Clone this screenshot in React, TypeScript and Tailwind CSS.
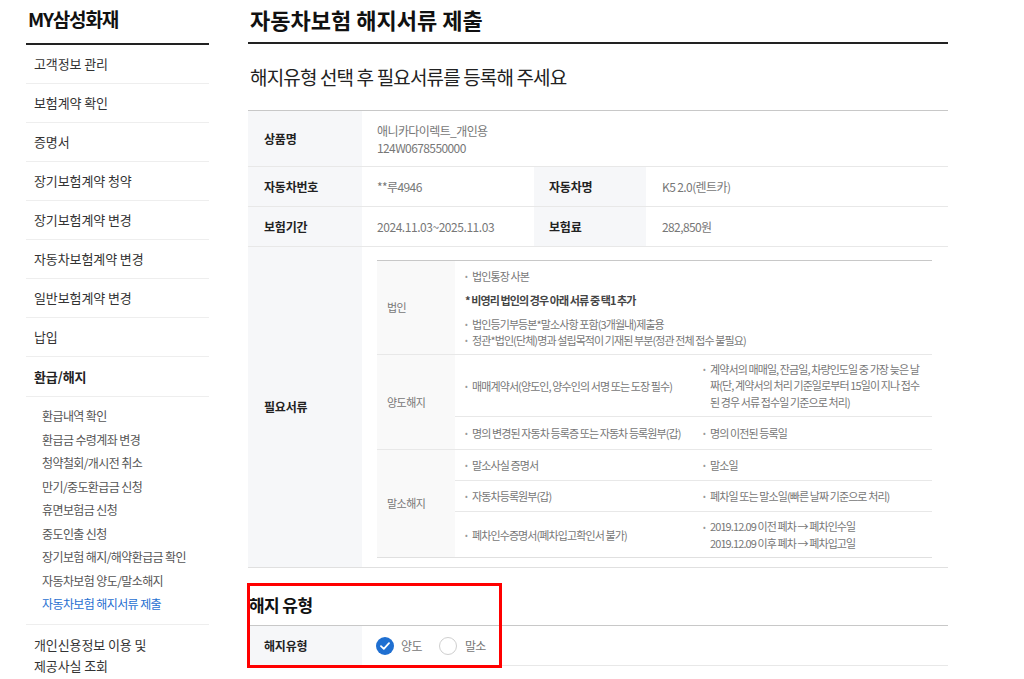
import React from "react";

const F = { fontFamily: '"Noto Sans CJK KR", "Noto Sans", sans-serif' };

function Bullet({ children }: { children: React.ReactNode }) {
  return (
    <div className="flex items-start leading-[16px]">
      <span className="w-[7px] shrink-0 text-[8px] text-[#999]">•</span>
      <span>{children}</span>
    </div>
  );
}

const menu = [
  "고객정보 관리",
  "보험계약 확인",
  "증명서",
  "장기보험계약 청약",
  "장기보험계약 변경",
  "자동차보험계약 변경",
  "일반보험계약 변경",
  "납입",
];

const sub = [
  "환급내역 확인",
  "환급금 수령계좌 변경",
  "청약철회/개시전 취소",
  "만기/중도환급금 신청",
  "휴면보험금 신청",
  "중도인출 신청",
  "장기보험 해지/해약환급금 확인",
  "자동차보험 양도/말소해지",
];

export default function App() {
  return (
    <div style={F} className="flex w-[1024px] h-[679px] overflow-hidden bg-white pl-[26px] text-[#333] tracking-[-0.6px]">
      <aside className="w-[183px] shrink-0">
        <div className="h-[45px] border-b-2 border-[#222] pl-[2px] pt-[5px] text-[19px] font-bold leading-[28px] text-[#111] tracking-[-1.2px]">
          MY삼성화재
        </div>
        {menu.map((m) => (
          <div key={m} className="flex h-[39px] items-center border-b border-[#eee] pl-[8px] text-[13px] tracking-[-0.1px]">
            {m}
          </div>
        ))}
        <div className="flex h-[40px] items-center border-b border-[#eee] pl-[8px] text-[13px] font-bold text-[#222] tracking-[-0.1px]">
          환급/해지
        </div>
        <div className="border-b border-[#eee] pb-[8px] pl-[16px] pt-[7px] text-[12px] text-[#555]">
          {sub.map((s) => (
            <div key={s} className="leading-[23.5px]">{s}</div>
          ))}
          <div className="leading-[23.5px] text-[#1f6fd1]">자동차보험 해지서류 제출</div>
        </div>
        <div className="pl-[8px] pt-[9px] text-[13px] leading-[21px] tracking-[-0.1px]">
          개인신용정보 이용 및<br />제공사실 조회
        </div>
      </aside>

      <main className="ml-[39px] w-[700px] shrink-0">
        <div className="h-[44px] border-b-2 border-[#222] pl-[2px] pt-[5px] text-[22px] font-bold leading-[28px] text-[#111] tracking-[0px]">
          자동차보험 해지서류 제출
        </div>
        <div className="pl-[2px] pt-[20px] pb-[20px] text-[19px] leading-[26px] text-[#222] tracking-[-0.85px]">
          해지유형 선택 후 필요서류를 등록해 주세요
        </div>

        <div className="border-t border-[#c8c8c8] text-[12px]">
          <div className="flex h-[56px] border-b border-[#e8e8e8]">
            <div className="flex w-[114px] shrink-0 items-center bg-[#f6f7f9] pl-[16px] font-bold text-[#222] tracking-[-0.2px]">상품명</div>
            <div className="flex flex-col justify-center pl-[15px] leading-[17px] text-[#777]">
              <div>애니카다이렉트_개인용</div>
              <div>124W0678550000</div>
            </div>
          </div>
          <div className="flex h-[40px] border-b border-[#e8e8e8]">
            <div className="flex w-[114px] shrink-0 items-center bg-[#f6f7f9] pl-[16px] font-bold text-[#222] tracking-[-0.2px]">자동차번호</div>
            <div className="flex w-[172px] items-center pl-[15px] text-[#777]">**루4946</div>
            <div className="flex w-[112px] shrink-0 items-center bg-[#f6f7f9] pl-[15px] font-bold text-[#222] tracking-[-0.2px]">자동차명</div>
            <div className="flex items-center pl-[16px] text-[#777]">K5 2.0(렌트카)</div>
          </div>
          <div className="flex h-[40px] border-b border-[#e8e8e8]">
            <div className="flex w-[114px] shrink-0 items-center bg-[#f6f7f9] pl-[16px] font-bold text-[#222] tracking-[-0.2px]">보험기간</div>
            <div className="flex w-[172px] items-center pl-[15px] text-[#777] tracking-[-0.45px]">2024.11.03~2025.11.03</div>
            <div className="flex w-[112px] shrink-0 items-center bg-[#f6f7f9] pl-[15px] font-bold text-[#222] tracking-[-0.2px]">보험료</div>
            <div className="flex items-center pl-[16px] text-[#777]">282,850원</div>
          </div>
          <div className="flex h-[321px] border-b border-[#e0e0e0]">
            <div className="flex w-[114px] shrink-0 items-center bg-[#f6f7f9] pl-[16px] font-bold text-[#222] tracking-[-0.2px]">필요서류</div>
            <div className="flex-1 pb-[12px] pl-[15px] pr-[16px] pt-[13px]">
              <div className="border-t border-[#c8c8c8] border-b border-b-[#e0e0e0] text-[11px] text-[#777] tracking-[-0.9px]">
                {/* 법인 */}
                <div className="flex h-[94px] border-b border-[#e8e8e8]">
                  <div className="flex w-[78px] shrink-0 items-center bg-[#f9f9f9] pl-[10px] tracking-[-0.5px]">법인</div>
                  <div className="pl-[10px] pt-[7px]">
                    <Bullet>법인통장 사본</Bullet>
                    <div className="my-[8px] font-bold leading-[16px] text-[#444]">* 비영리 법인의 경우 아래 서류 중 택1 추가</div>
                    <Bullet>법인등기부등본*말소사항 포함(3개월내)제출용</Bullet>
                    <Bullet>정관*법인(단체)명과 설립목적이 기재된 부분(정관 전체 접수 불필요)</Bullet>
                  </div>
                </div>
                {/* 양도해지 */}
                <div className="flex h-[95px] border-b border-[#e8e8e8]">
                  <div className="flex w-[78px] shrink-0 items-center bg-[#f9f9f9] pl-[10px] tracking-[-0.5px]">양도해지</div>
                  <div className="flex flex-1 flex-col">
                    <div className="flex h-[62px] border-b border-[#e8e8e8]">
                      <div className="flex w-[240px] shrink-0 items-center pl-[10px]">
                        <Bullet>매매계약서(양도인, 양수인의 서명 또는 도장 필수)</Bullet>
                      </div>
                      <div className="flex items-center pl-[8px]">
                        <div className="flex items-start leading-[16.5px]">
                          <span className="w-[7px] shrink-0 text-[8px] text-[#999]">•</span>
                          <span>
                            계약서의 매매일, 잔금일, 차량인도일 중 가장 늦은 날<br />
                            짜(단, 계약서의 처리 기준일로부터 15일이 지나 접수<br />
                            된 경우 서류 접수일 기준으로 처리)
                          </span>
                        </div>
                      </div>
                    </div>
                    <div className="flex flex-1">
                      <div className="flex w-[240px] shrink-0 items-center pl-[10px]">
                        <Bullet>명의 변경된 자동차 등록증 또는 자동차 등록원부(갑)</Bullet>
                      </div>
                      <div className="flex items-center pl-[8px]">
                        <Bullet>명의 이전된 등록일</Bullet>
                      </div>
                    </div>
                  </div>
                </div>
                {/* 말소해지 */}
                <div className="flex h-[107px]">
                  <div className="flex w-[78px] shrink-0 items-center bg-[#f9f9f9] pl-[10px] tracking-[-0.5px]">말소해지</div>
                  <div className="flex flex-1 flex-col">
                    <div className="flex h-[31px] border-b border-[#e8e8e8]">
                      <div className="flex w-[240px] shrink-0 items-center pl-[10px]">
                        <Bullet>말소사실 증명서</Bullet>
                      </div>
                      <div className="flex items-center pl-[8px]">
                        <Bullet>말소일</Bullet>
                      </div>
                    </div>
                    <div className="flex h-[31px] border-b border-[#e8e8e8]">
                      <div className="flex w-[240px] shrink-0 items-center pl-[10px]">
                        <Bullet>자동차등록원부(갑)</Bullet>
                      </div>
                      <div className="flex items-center pl-[8px]">
                        <Bullet>폐차일 또는 말소일(빠른 날짜 기준으로 처리)</Bullet>
                      </div>
                    </div>
                    <div className="flex flex-1">
                      <div className="flex w-[240px] shrink-0 items-center pl-[10px]">
                        <Bullet>폐차인수증명서(폐차입고확인서 불가)</Bullet>
                      </div>
                      <div className="flex items-center pl-[8px]">
                        <div className="flex items-start leading-[17px]">
                          <span className="w-[7px] shrink-0 text-[8px] text-[#999]">•</span>
                          <span>
                            2019.12.09 이전 폐차 → 폐차인수일<br />
                            2019.12.09 이후 폐차 → 폐차입고일
                          </span>
                        </div>
                      </div>
                    </div>
                  </div>
                </div>
              </div>
            </div>
          </div>
        </div>

        <div className="relative mt-[15px]">
          <div className="pl-[1px] pt-[12px] pb-[10px] text-[17px] font-bold leading-[20px] text-[#111]">해지 유형</div>
          <div className="flex h-[41px] border-t border-[#c8c8c8] border-b border-b-[#e8e8e8] text-[12px]">
            <div className="flex w-[114px] shrink-0 items-center bg-[#f6f7f9] pl-[16px] font-bold text-[#222] tracking-[-0.2px]">해지유형</div>
            <div className="flex items-center pl-[14px] text-[#777]">
              <span className="flex h-[18px] w-[18px] items-center justify-center rounded-full bg-[#1f6fd1]">
                <svg width="10" height="8" viewBox="0 0 10 8" fill="none">
                  <path d="M1 4.2L3.8 6.8L9 1.2" stroke="white" strokeWidth="1.8" strokeLinecap="round" strokeLinejoin="round" />
                </svg>
              </span>
              <span className="ml-[7px]">양도</span>
              <span className="ml-[17px] h-[18px] w-[18px] rounded-full border border-[#cfcfcf] bg-white"></span>
              <span className="ml-[8px]">말소</span>
            </div>
          </div>
          <div className="pointer-events-none absolute left-[-1px] top-0 h-[85px] w-[255px] border-[3px] border-[#ff0000]"></div>
        </div>
      </main>
    </div>
  );
}
